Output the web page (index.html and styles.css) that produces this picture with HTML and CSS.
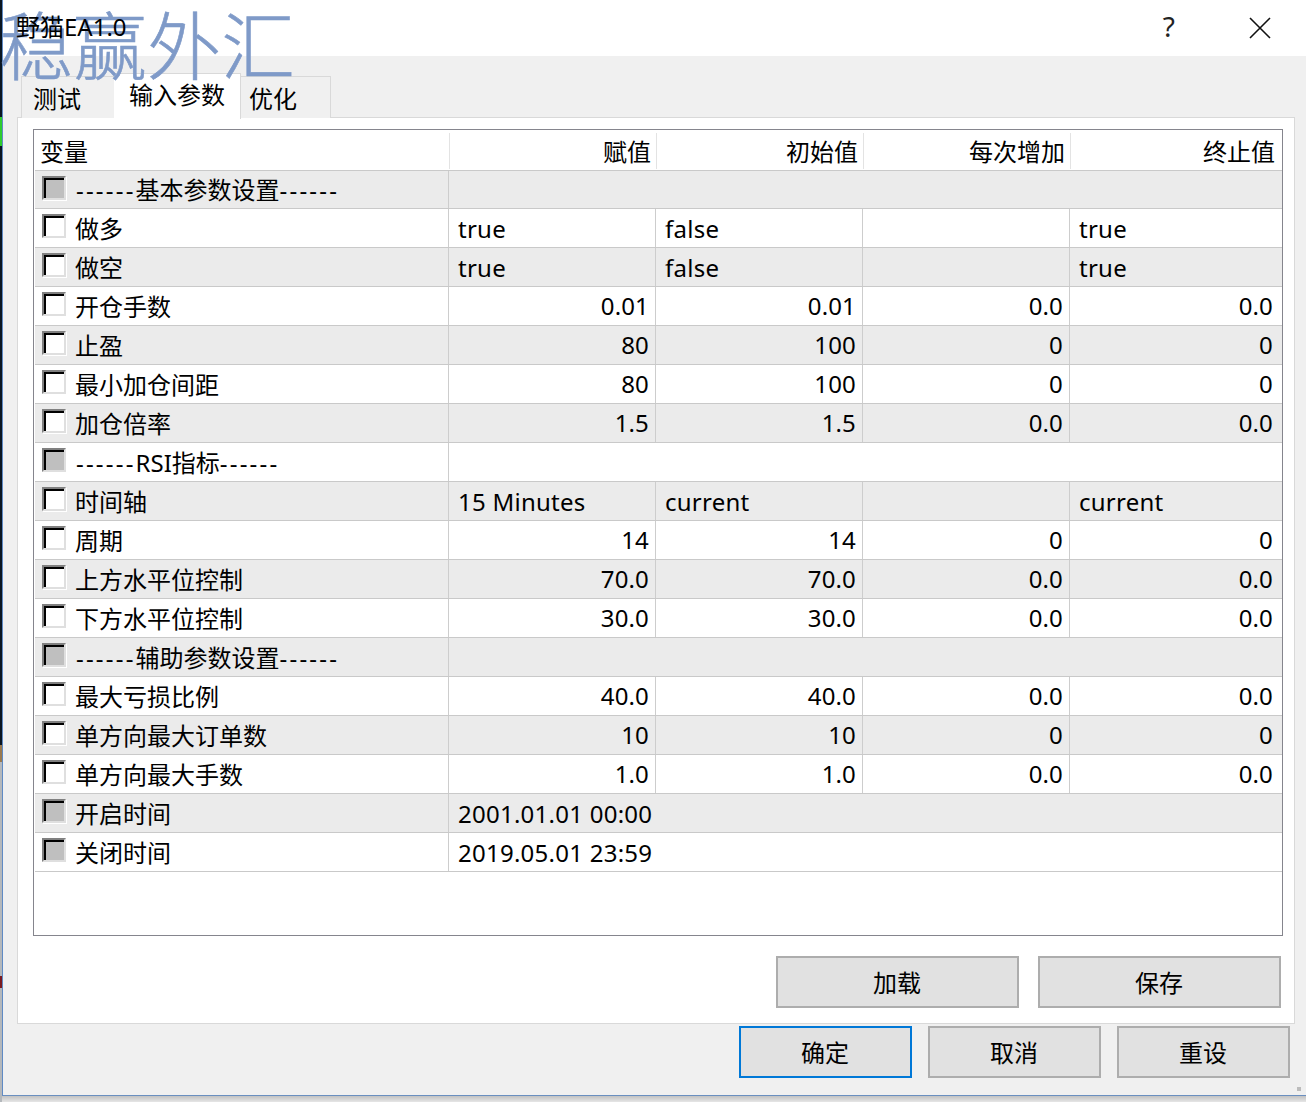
FILE: index.html
```html
<!DOCTYPE html>
<html lang="zh">
<head>
<meta charset="utf-8">
<title>野猫EA1.0</title>
<link rel="stylesheet" href="styles.css">
</head>
<body>
<div class="window">
  <header class="titlebar">
    <span class="title">野猫EA1.0</span>
    <div class="title-actions">
      <span class="help">?</span>
      <svg class="close" width="22" height="22" viewBox="0 0 22 22"><path d="M1 1 L21 21 M21 1 L1 21" fill="none" stroke="#111" stroke-width="1.6"/></svg>
    </div>
  </header>
  <div class="watermark">稳赢外汇</div>
  <main class="body">
    <nav class="tabs">
      <div class="tab">测试</div>
      <div class="tab active">输入参数</div>
      <div class="tab">优化</div>
    </nav>
    <section class="panel">
      <div class="grid">
        <div class="row head"><div>变量</div><div class="r">赋值</div><div class="r">初始值</div><div class="r">每次增加</div><div class="r">终止值</div></div>
        <div class="row alt group first"><div class="name"><i class="cb dis"></i><span class="sep"><span class="dash">------</span>基本参数设置<span class="dash">------</span></span></div><div class="span"></div></div>
        <div class="row"><div class="name"><i class="cb"></i>做多</div><div>true</div><div>false</div><div></div><div>true</div></div>
        <div class="row alt"><div class="name"><i class="cb"></i>做空</div><div>true</div><div>false</div><div></div><div>true</div></div>
        <div class="row"><div class="name"><i class="cb"></i>开仓手数</div><div class="r">0.01</div><div class="r">0.01</div><div class="r">0.0</div><div class="r">0.0</div></div>
        <div class="row alt"><div class="name"><i class="cb"></i>止盈</div><div class="r">80</div><div class="r">100</div><div class="r">0</div><div class="r">0</div></div>
        <div class="row"><div class="name"><i class="cb"></i>最小加仓间距</div><div class="r">80</div><div class="r">100</div><div class="r">0</div><div class="r">0</div></div>
        <div class="row alt"><div class="name"><i class="cb"></i>加仓倍率</div><div class="r">1.5</div><div class="r">1.5</div><div class="r">0.0</div><div class="r">0.0</div></div>
        <div class="row group"><div class="name"><i class="cb dis"></i><span class="sep"><span class="dash">------</span>RSI指标<span class="dash">------</span></span></div><div class="span"></div></div>
        <div class="row alt"><div class="name"><i class="cb"></i>时间轴</div><div>15 Minutes</div><div>current</div><div></div><div>current</div></div>
        <div class="row"><div class="name"><i class="cb"></i>周期</div><div class="r">14</div><div class="r">14</div><div class="r">0</div><div class="r">0</div></div>
        <div class="row alt"><div class="name"><i class="cb"></i>上方水平位控制</div><div class="r">70.0</div><div class="r">70.0</div><div class="r">0.0</div><div class="r">0.0</div></div>
        <div class="row"><div class="name"><i class="cb"></i>下方水平位控制</div><div class="r">30.0</div><div class="r">30.0</div><div class="r">0.0</div><div class="r">0.0</div></div>
        <div class="row alt group"><div class="name"><i class="cb dis"></i><span class="sep"><span class="dash">------</span>辅助参数设置<span class="dash">------</span></span></div><div class="span"></div></div>
        <div class="row"><div class="name"><i class="cb"></i>最大亏损比例</div><div class="r">40.0</div><div class="r">40.0</div><div class="r">0.0</div><div class="r">0.0</div></div>
        <div class="row alt"><div class="name"><i class="cb"></i>单方向最大订单数</div><div class="r">10</div><div class="r">10</div><div class="r">0</div><div class="r">0</div></div>
        <div class="row"><div class="name"><i class="cb"></i>单方向最大手数</div><div class="r">1.0</div><div class="r">1.0</div><div class="r">0.0</div><div class="r">0.0</div></div>
        <div class="row alt group"><div class="name"><i class="cb dis"></i>开启时间</div><div class="span">2001.01.01 00:00</div></div>
        <div class="row group"><div class="name"><i class="cb dis"></i>关闭时间</div><div class="span">2019.05.01 23:59</div></div>
      </div>
      <div class="panel-actions">
        <button class="btn wide">加载</button>
        <button class="btn wide">保存</button>
      </div>
    </section>
    <footer class="footer">
      <button class="btn primary">确定</button>
      <button class="btn">取消</button>
      <button class="btn">重设</button>
    </footer>
  </main>
  <i class="grip"></i>
</div>
</body>
</html>
```
FILE: styles.css
```css
* { box-sizing: border-box; }
html, body { margin: 0; height: 1102px; overflow: hidden; }
body {
  background:
    linear-gradient(#0a1622 0 117px, #2ecc2e 117px 146px, #0a1622 146px 745px, #9a7a50 745px 762px, #b4b8bc 762px 976px, #7a1a20 976px 988px, #b4b8bc 988px) left top / 2px 100% no-repeat,
    linear-gradient(#c2c2c2, #e6e6e6) left bottom / 100% 6px no-repeat,
    #e6e6e6;
  font-family: "Noto Sans", "Noto Sans CJK SC", sans-serif;
  font-size: 24px;
  color: #000;
}
.window {
  position: relative;
  height: 1096px;
  margin-left: 2px;
  border-left: 1px solid #5f8ac4;
  border-bottom: 1px solid #6a8fc0;
  background: #f0f0f0;
  display: flex;
  flex-direction: column;
}
.titlebar {
  height: 56px;
  background: #fff;
  display: flex;
  align-items: center;
  justify-content: space-between;
  padding: 0 35px 0 13px;
  flex: none;
}
.title { line-height: 56px; position: relative; top: -1px; z-index: 2; }
.title-actions { display: flex; align-items: center; gap: 74px; }
.help { font-size: 28px; line-height: 1; color: #222; padding-bottom: 4px; }
.close { display: block; }
.watermark {
  position: absolute;
  left: -4px;
  top: -2px;
  z-index: 1;
  font-family: "Noto Sans CJK SC", sans-serif;
  font-weight: 300;
  font-size: 74px;
  line-height: 88px;
  color: #7f9ac8;
  -webkit-text-stroke: 0.6px #7f9ac8;
  white-space: nowrap;
}
.body {
  flex: 1;
  display: flex;
  flex-direction: column;
  padding: 20px 11px 0 14px;
  min-height: 0;
}
.tabs {
  display: flex;
  height: 42px;
  padding-left: 4px;
  align-items: flex-end;
  position: relative;
  z-index: 0;
}
.tab {
  height: 42px;
  border: 1px solid #d9d9d9;
  border-bottom: 0;
  line-height: 40px;
  background: #f0f0f0;
}
.tab:first-child { width: 93px; border-right: 0; padding: 2px 0 0 11px; }
.tab:last-child { width: 90px; border-left: 0; padding: 2px 0 0 8px; }
.tab.active {
  width: 127px;
  height: 46px;
  margin-bottom: -1px;
  background: #fff;
  border-left: 0;
  padding: 2px 0 0 15px;
  line-height: 38px;
  position: relative;
  z-index: 1;
}
.panel {
  height: 907px;
  margin-top: -1px;
  background: #fff;
  border: 1px solid #d9d9d9;
  padding: 11px 11px 0 15px;
  display: flex;
  flex-direction: column;
}
.grid {
  height: 807px;
  border: 1px solid #85858d;
  padding: 0 0 0 1px;
  flex: none;
}
.row {
  display: grid;
  grid-template-columns: 413px 207px 207px 207px 1fr;
  grid-template-rows: minmax(0, 1fr);
  height: 39px;
  border-bottom: 1px solid #c9c9c9;
  line-height: 39px;
}
.row.first { height: 38px; line-height: 38px; }
.row > div {
  min-height: 0;
  padding: 0 9px 0 9px;
  border-left: 1px solid #cdcdcd;
  white-space: nowrap;
  letter-spacing: .25px;
}
.row > .name { border-left: 0; padding: 1px 0 0 7px; letter-spacing: 0; }
.row > .r { text-align: right; padding-right: 6px; letter-spacing: .15px; line-height: 38px; }
.row > .r:last-child { padding-right: 9px; }
.row.alt { background: #ebebeb; }
.sep { margin-left: 1px; }
.dash { letter-spacing: 2.2px; }
.row.group > .span { grid-column: 2 / 6; }
.name { display: flex; align-items: center; gap: 9px; }
.cb {
  display: block;
  width: 24px;
  height: 24px;
  flex: none;
  margin-top: -5px;
  background: #fff;
  border: 2px solid;
  border-color: #808080 #dfdfdf #dfdfdf #808080;
  box-shadow: inset 2px 2px 0 #000, 1px 1px 0 #fff;
}
.cb.dis { background: #bfbfbf; }
.row.head {
  grid-template-columns: 414px 207px 207px 207px 1fr;
  height: 41px;
  background: #fff;
}
.row.head > div {
  margin-top: 3px;
  line-height: 38px;
  height: 36px;
  border-left-color: #e3e3e3;
  letter-spacing: 0;
}
.row.head > div:first-child { border-left: 0; padding: 0 0 0 5px; }
.row.head > .r { padding-right: 5px; }
.row.head > .r:last-child { padding-right: 7px; }
.panel-actions {
  display: flex;
  justify-content: flex-end;
  gap: 19px;
  margin-top: 20px;
  padding-right: 2px;
}
.btn {
  font: inherit;
  color: #000;
  background: #e1e1e1;
  border: 2px solid #adadad;
  padding: 2px 1px 0 0;
  width: 173px;
  height: 52px;
  line-height: 1;
}
.btn.wide { width: 243px; }
.btn.primary { border-color: #0078d7; }
.footer {
  display: flex;
  justify-content: flex-end;
  gap: 16px;
  padding: 2px 5px 0 0;
}
.grip {
  position: absolute;
  right: 5px;
  bottom: 4px;
  width: 4px;
  height: 4px;
  background: #bcbcbc;
}
```
